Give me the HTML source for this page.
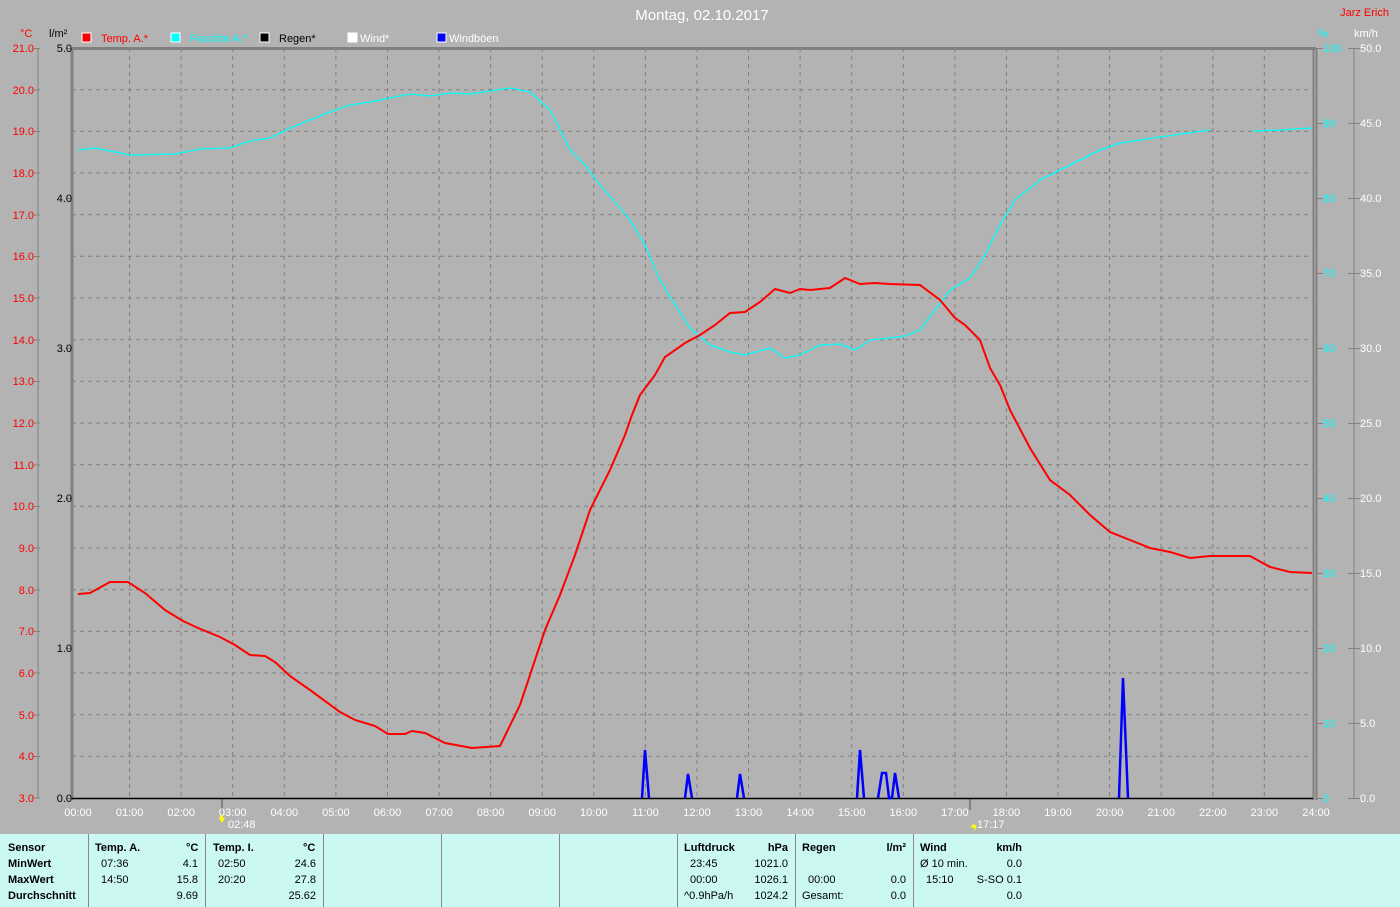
<!DOCTYPE html>
<html><head><meta charset="utf-8"><style>
html,body{margin:0;padding:0;width:1400px;height:907px;overflow:hidden;background:#b3b3b3;font-family:"Liberation Sans",sans-serif;}
svg text{font-family:"Liberation Sans",sans-serif;font-size:11px;}
.tbl{position:absolute;left:0;top:834px;width:1400px;height:73px;background:#ccf8f4;font-size:11px;color:#000;}
.sep{position:absolute;top:0;width:1px;height:73px;background:#888;}
.t{position:absolute;white-space:nowrap;}
.b{font-weight:bold;}
</style></head><body>
<svg width="1400" height="834" style="position:absolute;left:0;top:0">
<text x="702" y="20" fill="#fff" font-size="15" text-anchor="middle" style="font-size:15px">Montag, 02.10.2017</text>
<text x="1389" y="16" fill="#f00" text-anchor="end">Jarz Erich</text>
<text x="20" y="37" fill="#f00">°C</text>
<text x="49" y="37" fill="#000">l/m²</text>
<text x="1318" y="37" fill="#0ff">%</text>
<text x="1354" y="37" fill="#fff">km/h</text>
<rect x="82" y="33" width="9" height="9" fill="#f00" stroke="#fff"/><text x="101" y="42" fill="#f00">Temp. A.*</text>
<rect x="171" y="33" width="9" height="9" fill="#0ff" stroke="#fff"/><text x="190" y="42" fill="#0ff">Feuchte A.*</text>
<rect x="260" y="33" width="9" height="9" fill="#000" stroke="#fff"/><text x="279" y="42" fill="#000">Regen*</text>
<rect x="348" y="33" width="9" height="9" fill="#fff" stroke="#fff"/><text x="360" y="42" fill="#fff">Wind*</text>
<rect x="437" y="33" width="9" height="9" fill="#00f" stroke="#fff"/><text x="449" y="42" fill="#fff">Windböen</text>
<g stroke="#808080" stroke-width="1" stroke-dasharray="4,4" fill="none">
<path d="M129.6 48V798M181.2 48V798M232.7 48V798M284.3 48V798M335.9 48V798M387.5 48V798M439.1 48V798M490.6 48V798M542.2 48V798M593.8 48V798M645.4 48V798M697 48V798M748.5 48V798M800.1 48V798M851.7 48V798M903.3 48V798M954.9 48V798M1006.4 48V798M1058 48V798M1109.6 48V798M1161.2 48V798M1212.8 48V798M1264.3 48V798"/>
<path d="M72 756.3H1313M72 714.7H1313M72 673H1313M72 631.3H1313M72 589.7H1313M72 548H1313M72 506.3H1313M72 464.7H1313M72 423H1313M72 381.3H1313M72 339.7H1313M72 298H1313M72 256.3H1313M72 214.7H1313M72 173H1313M72 131.3H1313M72 89.7H1313"/>
</g>
<g stroke="#808080" fill="none">
<path d="M72 48.5H1316" stroke-width="3"/>
<path d="M72 48V800" stroke-width="3"/>
<path d="M1313.5 48V800M1316.5 48V800" stroke-width="2"/>
<path d="M38 48V798M1354 48V798"/>
<path d="M33 48.5H40M33 90H40M33 131.5H40M33 173H40M33 215H40M33 256.5H40M33 298H40M33 340H40M33 381.5H40M33 423H40M33 465H40M33 506.5H40M33 548H40M33 590H40M33 631.5H40M33 673H40M33 715H40M33 756.5H40M33 798H40"/>
<path d="M66 48.5H72M66 198.5H72M66 348.5H72M66 498.5H72M66 648.5H72M66 798.5H72"/>
<path d="M1316 48.5H1323M1316 123.5H1323M1316 198.5H1323M1316 273.5H1323M1316 348.5H1323M1316 423.5H1323M1316 498.5H1323M1316 573.5H1323M1316 648.5H1323M1316 723.5H1323M1316 798.5H1323"/>
<path d="M1348 48.5H1360M1348 123.5H1360M1348 198.5H1360M1348 273.5H1360M1348 348.5H1360M1348 423.5H1360M1348 498.5H1360M1348 573.5H1360M1348 648.5H1360M1348 723.5H1360M1348 798.5H1360"/>
<path d="M222 798V810M970 798V810" stroke-width="2"/>
</g>
<path d="M72 798.5H1313" stroke="#000" stroke-width="1.5"/>
<g fill="#f00" text-anchor="end">
<text x="34" y="52">21.0</text><text x="34" y="94">20.0</text><text x="34" y="135">19.0</text><text x="34" y="177">18.0</text><text x="34" y="219">17.0</text><text x="34" y="260">16.0</text><text x="34" y="302">15.0</text><text x="34" y="344">14.0</text><text x="34" y="385">13.0</text><text x="34" y="427">12.0</text><text x="34" y="469">11.0</text><text x="34" y="510">10.0</text><text x="34" y="552">9.0</text><text x="34" y="594">8.0</text><text x="34" y="635">7.0</text><text x="34" y="677">6.0</text><text x="34" y="719">5.0</text><text x="34" y="760">4.0</text><text x="34" y="802">3.0</text>
</g>
<g fill="#000" text-anchor="end">
<text x="72" y="52">5.0</text><text x="72" y="202">4.0</text><text x="72" y="352">3.0</text><text x="72" y="502">2.0</text><text x="72" y="652">1.0</text><text x="72" y="802">0.0</text>
</g>
<g fill="#0ff">
<text x="1323" y="52">100</text><text x="1323" y="127">90</text><text x="1323" y="202">80</text><text x="1323" y="277">70</text><text x="1323" y="352">60</text><text x="1323" y="427">50</text><text x="1323" y="502">40</text><text x="1323" y="577">30</text><text x="1323" y="652">20</text><text x="1323" y="727">10</text><text x="1323" y="802">0</text>
</g>
<g fill="#fff">
<text x="1360" y="52">50.0</text><text x="1360" y="127">45.0</text><text x="1360" y="202">40.0</text><text x="1360" y="277">35.0</text><text x="1360" y="352">30.0</text><text x="1360" y="427">25.0</text><text x="1360" y="502">20.0</text><text x="1360" y="577">15.0</text><text x="1360" y="652">10.0</text><text x="1360" y="727">5.0</text><text x="1360" y="802">0.0</text>
</g>
<g fill="#fff" text-anchor="middle">
<text x="78" y="816">00:00</text><text x="129.6" y="816">01:00</text><text x="181.2" y="816">02:00</text><text x="232.7" y="816">03:00</text><text x="284.3" y="816">04:00</text><text x="335.9" y="816">05:00</text><text x="387.5" y="816">06:00</text><text x="439.1" y="816">07:00</text><text x="490.6" y="816">08:00</text><text x="542.2" y="816">09:00</text><text x="593.8" y="816">10:00</text><text x="645.4" y="816">11:00</text><text x="697" y="816">12:00</text><text x="748.5" y="816">13:00</text><text x="800.1" y="816">14:00</text><text x="851.7" y="816">15:00</text><text x="903.3" y="816">16:00</text><text x="954.9" y="816">17:00</text><text x="1006.4" y="816">18:00</text><text x="1058" y="816">19:00</text><text x="1109.6" y="816">20:00</text><text x="1161.2" y="816">21:00</text><text x="1212.8" y="816">22:00</text><text x="1264.3" y="816">23:00</text><text x="1316" y="816">24:00</text>
</g>
<text x="228" y="828" fill="#fff">02:48</text><text x="977" y="828" fill="#fff">17:17</text>
<path d="M219 818l3-4 1 4 2 0-3 5z" fill="#ff0"/><path d="M973 824l-3 4 4-1 0 4 3-5z" fill="#ff0"/>
<polyline fill="none" stroke="#0ff" stroke-width="1.3" points="78,150 95,148 130,155 175,154 200,149 230,148 250,141 270,138 290,128 310,120 330,112 350,105 370,102 390,98 410,94 430,96 450,93 470,94 490,91 510,88 530,92 550,110 570,150 585,165 600,185 615,202 630,220 645,245 660,280 675,305 690,328 710,345 730,352 745,355 770,348 785,358 800,355 820,345 840,344 855,350 870,340 890,338 905,336 920,330 935,310 950,290 970,278 985,255 1000,225 1015,200 1040,180 1060,170 1080,160 1100,150 1120,143 1140,140 1160,137 1210,130"/>
<polyline fill="none" stroke="#0ff" stroke-width="1.3" points="1253,131 1280,130 1312,128"/>
<polyline fill="none" stroke="#f00" stroke-width="2" points="78,594 90,593 110,582 128,582 145,593 165,610 183,621 198,628 220,637 235,645 250,655 265,656 275,662 290,676 310,690 340,712 355,720 375,726 388,734 405,734 412,731 425,733 445,743 472,748 500,746 520,705 530,675 545,630 560,595 575,555 590,510 610,470 625,435 632,415 640,395 655,375 665,357 685,343 700,335 715,325 730,313 745,312 760,302 775,289 790,293 800,289 810,290 830,288 845,278 860,284 875,283 890,284 920,285 940,300 955,318 965,325 980,340 990,368 1000,385 1010,410 1030,448 1050,480 1070,495 1090,515 1110,532 1130,540 1150,548 1170,552 1190,558 1210,556 1250,556 1270,567 1290,572 1312,573"/>
<g fill="none" stroke="#00f" stroke-width="2.5">
<polyline points="642,798 645,750 649,798"/>
<polyline points="685,798 688,774 692,798"/>
<polyline points="737,798 740,774 744,798"/>
<polyline points="857,798 860,750 864,798"/>
<polyline points="878,798 882,773 886,773 889,798 892,798 895,773 899,798"/>
<polyline points="1119,798 1123,678 1128,798"/>
</g>
</svg>
<div class="tbl">
<div class="sep" style="left:88px"></div><div class="sep" style="left:205px"></div><div class="sep" style="left:323px"></div><div class="sep" style="left:441px"></div><div class="sep" style="left:559px"></div><div class="sep" style="left:677px"></div><div class="sep" style="left:795px"></div><div class="sep" style="left:913px"></div>
<div class="t b" style="left:8px;top:8px">Sensor</div><div class="t b" style="left:8px;top:24px">MinWert</div><div class="t b" style="left:8px;top:40px">MaxWert</div><div class="t b" style="left:8px;top:56px">Durchschnitt</div>
<div class="t b" style="left:95px;top:8px">Temp. A.</div><div class="t b" style="left:186px;top:8px">°C</div>
<div class="t" style="left:101px;top:24px">07:36</div><div class="t" style="right:1202px;top:24px">4.1</div>
<div class="t" style="left:101px;top:40px">14:50</div><div class="t" style="right:1202px;top:40px">15.8</div>
<div class="t" style="right:1202px;top:56px">9.69</div>
<div class="t b" style="left:213px;top:8px">Temp. I.</div><div class="t b" style="left:303px;top:8px">°C</div>
<div class="t" style="left:218px;top:24px">02:50</div><div class="t" style="right:1084px;top:24px">24.6</div>
<div class="t" style="left:218px;top:40px">20:20</div><div class="t" style="right:1084px;top:40px">27.8</div>
<div class="t" style="right:1084px;top:56px">25.62</div>
<div class="t b" style="left:684px;top:8px">Luftdruck</div><div class="t b" style="right:612px;top:8px">hPa</div>
<div class="t" style="left:690px;top:24px">23:45</div><div class="t" style="right:612px;top:24px">1021.0</div>
<div class="t" style="left:690px;top:40px">00:00</div><div class="t" style="right:612px;top:40px">1026.1</div>
<div class="t" style="left:684px;top:56px">^0.9hPa/h</div><div class="t" style="right:612px;top:56px">1024.2</div>
<div class="t b" style="left:802px;top:8px">Regen</div><div class="t b" style="right:494px;top:8px">l/m²</div>
<div class="t" style="left:808px;top:40px">00:00</div><div class="t" style="right:494px;top:40px">0.0</div>
<div class="t" style="left:802px;top:56px">Gesamt:</div><div class="t" style="right:494px;top:56px">0.0</div>
<div class="t b" style="left:920px;top:8px">Wind</div><div class="t b" style="right:378px;top:8px">km/h</div>
<div class="t" style="left:920px;top:24px">Ø 10 min.</div><div class="t" style="right:378px;top:24px">0.0</div>
<div class="t" style="left:926px;top:40px">15:10</div><div class="t" style="right:378px;top:40px">S-SO 0.1</div>
<div class="t" style="right:378px;top:56px">0.0</div>
</div>
</body></html>
